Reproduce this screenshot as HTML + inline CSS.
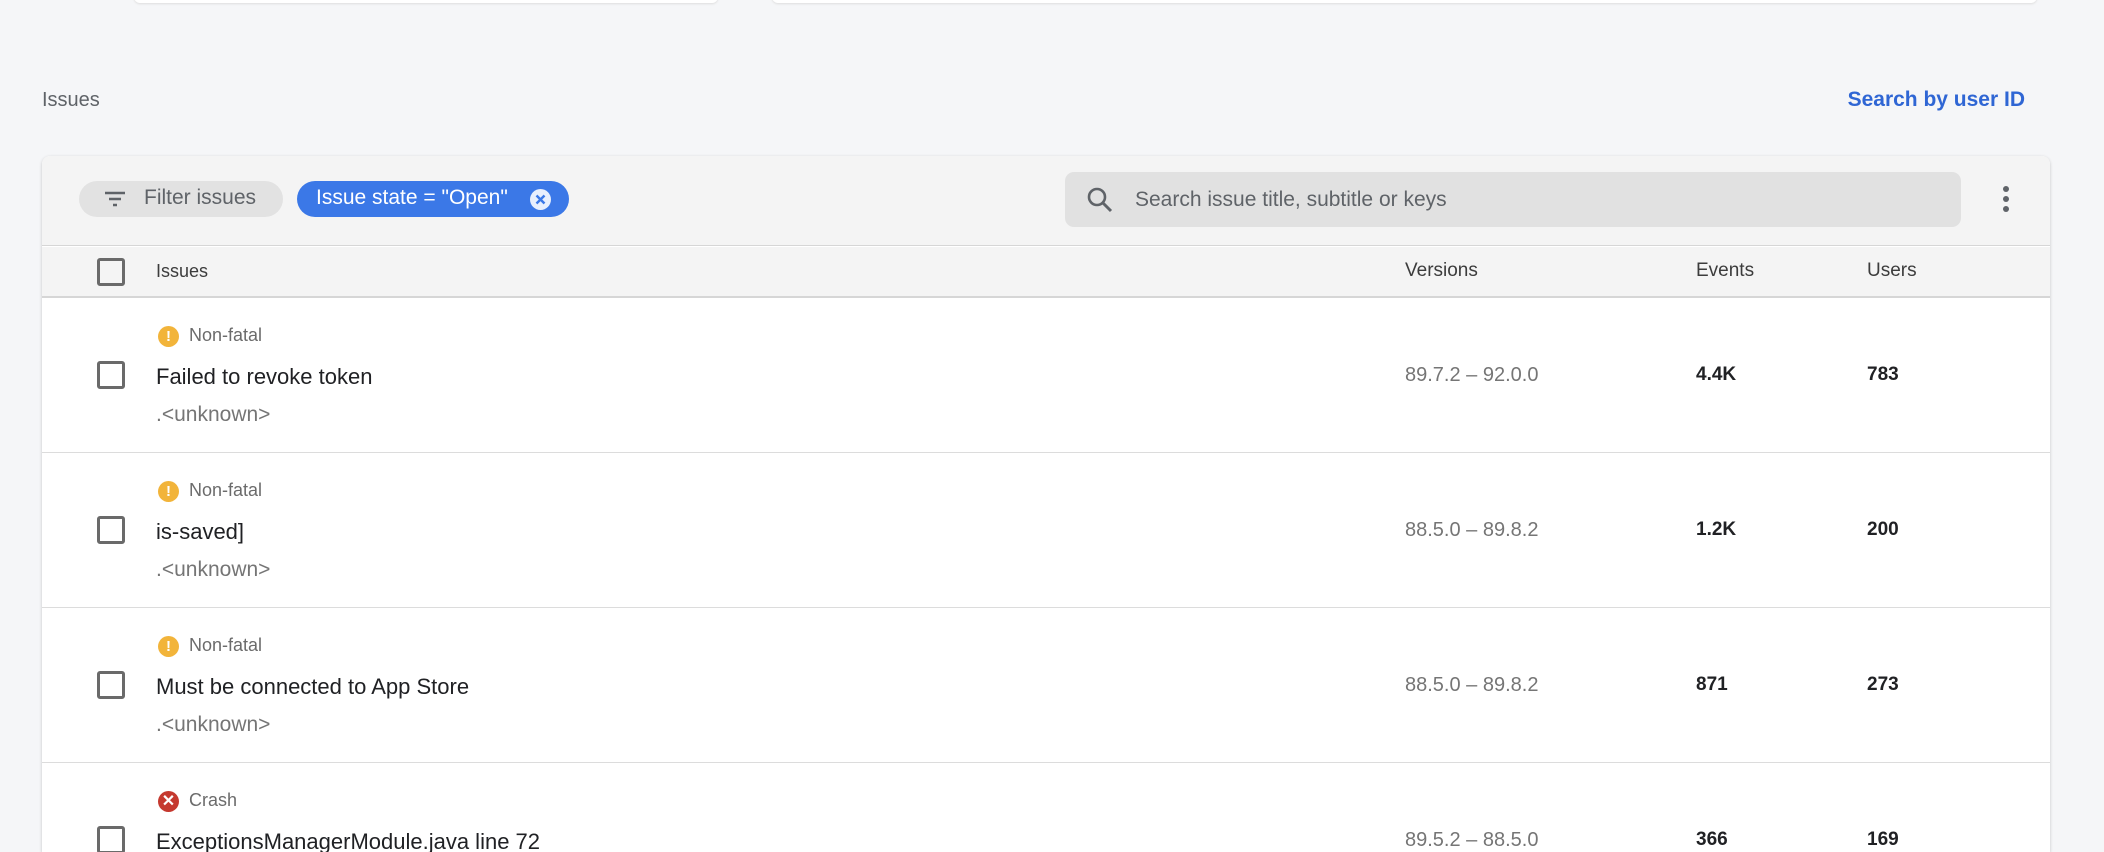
<!DOCTYPE html>
<html style="overflow:hidden;height:852px"><head><style>
*{margin:0;padding:0;box-sizing:border-box}
html,body{overflow:hidden}
body{width:2104px;height:852px;overflow:hidden;background:#f5f6f8;font-family:"Liberation Sans",Arial,sans-serif;position:relative}
.a{position:absolute;white-space:nowrap}
.cb{position:absolute;left:97px;width:28px;height:28px;border:3px solid #6a6a6a;border-radius:3px;background:#fff}
.lbl{font-size:18px;color:#6b6b6b}
.ttl{font-size:22px;color:#202124}
.sub{font-size:21px;color:#757575}
.ver{font-size:20px;color:#757575}
.num{font-size:19px;color:#202124;font-weight:bold}
.ic{position:absolute;width:21px;height:21px;border-radius:50%;color:#fff;font-weight:bold;font-size:15px;text-align:center;line-height:21px}
.row{position:absolute;left:42px;width:2008px;height:155px;background:#fff;border-bottom:1px solid #dcdcdc}
</style></head><body>
<div class="a" style="left:134px;top:-10px;width:584px;height:13px;background:#fff;box-shadow:0 1px 2px #ddd;border-radius:0 0 6px 6px"></div>
<div class="a" style="left:772px;top:-10px;width:1265px;height:13px;background:#fff;box-shadow:0 1px 2px #ddd;border-radius:0 0 6px 6px"></div>
<div class="a" style="left:42px;top:89px;font-size:20px;color:#5f6368">Issues</div>
<div class="a" style="right:79px;top:88px;font-size:21px;color:#2f66d4;font-weight:bold">Search by user ID</div>

<div class="a" style="left:42px;top:156px;width:2008px;height:696px;background:#fff;border-radius:8px 8px 0 0;box-shadow:0 1px 3px rgba(0,0,0,.2);overflow:hidden">
 <div class="a" style="left:0;top:0;width:2008px;height:90px;background:#f4f4f4;border-bottom:1px solid #d6d6d6"></div>
 <div class="a" style="left:37px;top:25px;width:204px;height:36px;border-radius:18px;background:#e2e2e2"></div>
 <svg class="a" style="left:61px;top:33px" width="24" height="20" viewBox="0 0 24 20"><path d="M2 4h20M6 10h12M10 16h4" stroke="#5f6368" stroke-width="2.4"/></svg>
 <div class="a" style="left:102px;top:30px;font-size:21px;color:#5f6368">Filter issues</div>
 <div class="a" style="left:255px;top:25px;width:272px;height:36px;border-radius:18px;background:#3b78e7"></div>
 <div class="a" style="left:274px;top:30px;font-size:21px;color:#fff">Issue state = "Open"</div>
 <div class="a" style="left:488px;top:33px;width:21px;height:21px;border-radius:50%;background:#e8effd"></div>
 <svg class="a" style="left:488px;top:33px" width="21" height="21"><path d="M6.5 6.5l8 8M14.5 6.5l-8 8" stroke="#3b78e7" stroke-width="2.4"/></svg>
 <div class="a" style="left:1023px;top:16px;width:896px;height:55px;border-radius:9px;background:#e1e1e1"></div>
 <svg class="a" style="left:1043px;top:29px" width="30" height="30" viewBox="0 0 30 30"><circle cx="12" cy="12" r="8" stroke="#5f6368" stroke-width="2.6" fill="none"/><path d="M18 18l8 8" stroke="#5f6368" stroke-width="3"/></svg>
 <div class="a" style="left:1093px;top:32px;font-size:21px;color:#5f6368">Search issue title, subtitle or keys</div>
 <div class="a" style="left:1961px;top:30px;width:6px;height:6px;border-radius:3px;background:#5f6368"></div>
 <div class="a" style="left:1961px;top:40px;width:6px;height:6px;border-radius:3px;background:#5f6368"></div>
 <div class="a" style="left:1961px;top:50px;width:6px;height:6px;border-radius:3px;background:#5f6368"></div>
 <div class="a" style="left:0;top:91px;width:2008px;height:51px;background:#f4f4f4;border-bottom:2px solid #d6d6d6"></div>
</div>
<div class="cb" style="top:258px;background:transparent"></div>
<div class="a" style="left:156px;top:261px;font-size:18px;color:#3c3c3c">Issues</div>
<div class="a" style="left:1405px;top:260px;font-size:19px;color:#3c3c3c">Versions</div>
<div class="a" style="left:1696px;top:260px;font-size:19px;color:#3c3c3c">Events</div>
<div class="a" style="left:1867px;top:260px;font-size:19px;color:#3c3c3c">Users</div>

<div class="row" style="top:298px"></div>
<div class="row" style="top:453px"></div>
<div class="row" style="top:608px"></div>
<div class="row" style="top:763px;height:89px;border-bottom:none"></div>

<!-- row1 -->
<div class="ic" style="left:158px;top:326px;background:#f2b43a">!</div>
<div class="a lbl" style="left:189px;top:325px">Non-fatal</div>
<div class="cb" style="top:361px"></div>
<div class="a ttl" style="left:156px;top:364px">Failed to revoke token</div>
<div class="a sub" style="left:156px;top:403px">.&lt;unknown&gt;</div>
<div class="a ver" style="left:1405px;top:364px">89.7.2 – 92.0.0</div>
<div class="a num" style="left:1696px;top:364px">4.4K</div>
<div class="a num" style="left:1867px;top:364px">783</div>
<!-- row2 -->
<div class="ic" style="left:158px;top:481px;background:#f2b43a">!</div>
<div class="a lbl" style="left:189px;top:480px">Non-fatal</div>
<div class="cb" style="top:516px"></div>
<div class="a ttl" style="left:156px;top:519px">is-saved]</div>
<div class="a sub" style="left:156px;top:558px">.&lt;unknown&gt;</div>
<div class="a ver" style="left:1405px;top:519px">88.5.0 – 89.8.2</div>
<div class="a num" style="left:1696px;top:519px">1.2K</div>
<div class="a num" style="left:1867px;top:519px">200</div>
<!-- row3 -->
<div class="ic" style="left:158px;top:636px;background:#f2b43a">!</div>
<div class="a lbl" style="left:189px;top:635px">Non-fatal</div>
<div class="cb" style="top:671px"></div>
<div class="a ttl" style="left:156px;top:674px">Must be connected to App Store</div>
<div class="a sub" style="left:156px;top:713px">.&lt;unknown&gt;</div>
<div class="a ver" style="left:1405px;top:674px">88.5.0 – 89.8.2</div>
<div class="a num" style="left:1696px;top:674px">871</div>
<div class="a num" style="left:1867px;top:674px">273</div>
<!-- row4 -->
<div class="ic" style="left:158px;top:791px;background:#c5392f;font-size:16px">✕</div>
<div class="a lbl" style="left:189px;top:790px">Crash</div>
<div class="cb" style="top:826px"></div>
<div class="a ttl" style="left:156px;top:829px">ExceptionsManagerModule.java line 72</div>
<div class="a ver" style="left:1405px;top:829px">89.5.2 – 88.5.0</div>
<div class="a num" style="left:1696px;top:829px">366</div>
<div class="a num" style="left:1867px;top:829px">169</div>
</body></html>
